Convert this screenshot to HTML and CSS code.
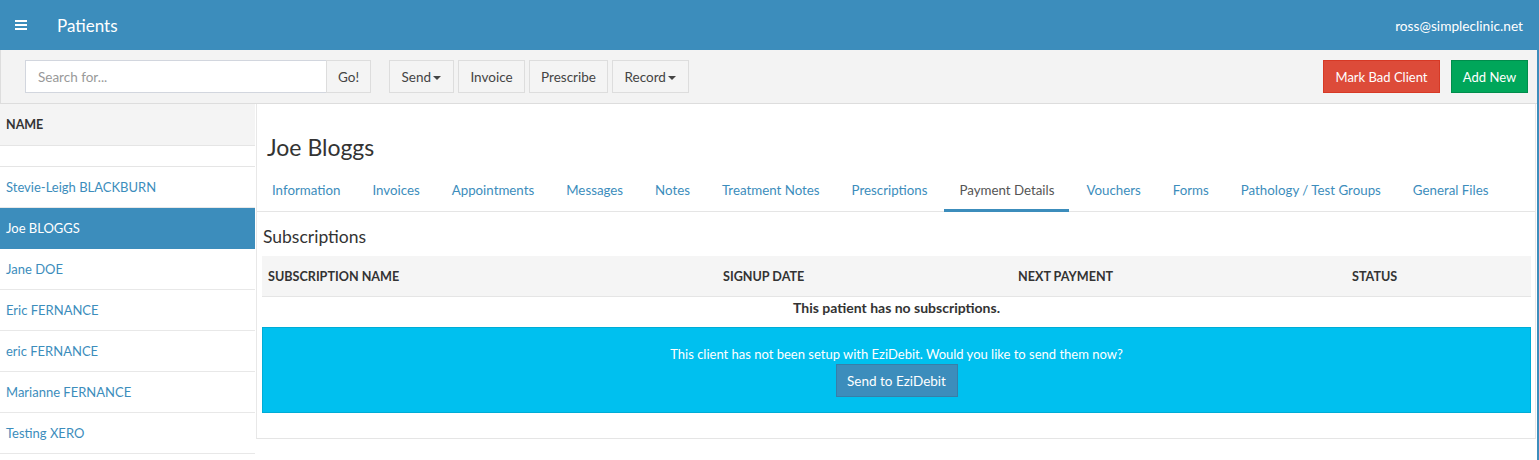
FILE: index.html
```html
<!DOCTYPE html>
<html>
<head>
<meta charset="utf-8">
<link rel="stylesheet" href="styles.css">
</head>
<body>
<header class="navbar">
  <span class="burger"><i></i><i></i><i></i></span>
  <span class="title">Patients</span>
  <span class="email">ross@simpleclinic.net</span>
</header>
<div class="wrap">
  <div class="toolbar">
    <div class="search">
      <input class="search-input" type="text" placeholder="Search for...">
      <button class="btn go">Go!</button>
    </div>
    <div class="actions">
      <button class="btn w-send">Send <span class="caret"></span></button>
      <button class="btn w-inv">Invoice</button>
      <button class="btn w-pre">Prescribe</button>
      <button class="btn w-rec">Record <span class="caret"></span></button>
    </div>
    <div class="right">
      <button class="btn danger">Mark Bad Client</button>
      <button class="btn success">Add New</button>
    </div>
  </div>
  <div class="main">
    <aside class="sidebar">
      <div class="side-head">NAME</div>
      <div class="side-empty"></div>
      <div class="side-row">Stevie-Leigh BLACKBURN</div>
      <div class="side-row active">Joe BLOGGS</div>
      <div class="side-row">Jane DOE</div>
      <div class="side-row">Eric FERNANCE</div>
      <div class="side-row">eric FERNANCE</div>
      <div class="side-row">Marianne FERNANCE</div>
      <div class="side-row">Testing XERO</div>
    </aside>
    <section class="panel">
      <h1 class="patient">Joe Bloggs</h1>
      <nav class="tabs">
        <span class="tab">Information</span>
        <span class="tab">Invoices</span>
        <span class="tab">Appointments</span>
        <span class="tab">Messages</span>
        <span class="tab">Notes</span>
        <span class="tab">Treatment Notes</span>
        <span class="tab">Prescriptions</span>
        <span class="tab active">Payment Details</span>
        <span class="tab">Vouchers</span>
        <span class="tab">Forms</span>
        <span class="tab">Pathology / Test Groups</span>
        <span class="tab">General Files</span>
      </nav>
      <div class="tab-body">
        <h3 class="sub-title">Subscriptions</h3>
        <div class="table">
          <div class="thead">
            <span>SUBSCRIPTION NAME</span>
            <span>SIGNUP DATE</span>
            <span>NEXT PAYMENT</span>
            <span>STATUS</span>
          </div>
          <div class="empty-row">This patient has no subscriptions.</div>
        </div>
        <div class="callout">
          <p>This client has not been setup with EziDebit. Would you like to send them now?</p>
          <button class="btn primary">Send to EziDebit</button>
        </div>
      </div>
    </section>
  </div>
</div>
</body>
</html>
```
FILE: styles.css
```css
* { box-sizing: border-box; }
html, body { margin: 0; padding: 0; background: #fff; }
body {
  font-family: Lato, "Open Sans", sans-serif;
  font-size: 14px;
  color: #333;
  width: 1539px;
  height: 460px;
  overflow: hidden;
}
.navbar {
  height: 50px;
  background: #3c8dbc;
  color: #fff;
  display: flex;
  align-items: center;
  padding: 0 16px 0 15px;
}
.burger {
  width: 12px;
  height: 10px;
  display: flex;
  flex-direction: column;
  justify-content: space-between;
}
.burger i { display: block; height: 2px; background: #fff; }
.title { margin-left: 30px; font-size: 17px; }
.email { margin-left: auto; font-size: 13.7px; }

.wrap {
  border-right: 2px solid #3c8dbc;
  height: 410px;
}
.toolbar {
  height: 54px;
  background: #f3f3f3;
  border-left: 1px solid #ddd;
  border-bottom: 1px solid #ddd;
  display: flex;
  align-items: center;
  padding: 0 9px 0 24px;
}
.search { display: flex; }
.search-input {
  width: 302px;
  height: 33px;
  border: 1px solid #d2d6de;
  padding: 0 12px;
  font: inherit;
  font-size: 13.5px;
  color: #555;
  outline: none;
}
.search-input::placeholder { color: #999; }
.btn {
  height: 33px;
  font: inherit;
  font-size: 13.5px;
  color: #444;
  background: #f4f4f4;
  border: 1px solid #ddd;
  padding: 0 12px;
  cursor: pointer;
  white-space: nowrap;
}
.go { width: 45px; margin-left: -1px; padding: 0; }
.actions { display: flex; gap: 4px; margin-left: 18px; }
.w-send { width: 65px; padding: 0; }
.w-inv { width: 67px; padding: 0; }
.w-pre { width: 79px; padding: 0; }
.w-rec { width: 77px; padding: 0; }
.caret {
  display: inline-block;
  width: 0; height: 0;
  border-left: 4px solid transparent;
  border-right: 4px solid transparent;
  border-top: 4px solid #444;
  vertical-align: middle;
  margin-left: -1px;
}
.right { margin-left: auto; display: flex; gap: 11px; }
.danger { background: #dd4b39; border-color: #d73925; color: #fff; width: 117px; padding: 0; font-size: 13px; }
.success { background: #00a65a; border-color: #008d4c; color: #fff; width: 77px; padding: 0; font-size: 13px; }

.main { display: flex; height: 356px; }
.sidebar { width: 256px; flex: none; }
.side-head {
  height: 42px;
  background: #f4f4f4;
  border-bottom: 1px solid #e5e5e5;
  font-weight: bold;
  font-size: 12.5px;
  display: flex;
  align-items: center;
  padding-left: 6px;
  color: #333;
  width: 255px;
}
.side-empty { height: 21px; border-bottom: 1px solid #e5e5e5; width: 255px; }
.side-row {
  height: 41px;
  width: 255px;
  border-bottom: 1px solid #e8e8e8;
  display: flex;
  align-items: center;
  padding-left: 6px;
  color: #3c8dbc;
  font-size: 13px;
}
.side-row.active { background: #3c8dbc; color: #fff; border-bottom-color: #3c8dbc; }

.panel {
  flex: 1;
  height: 335px;
  border-left: 1px solid #e8e8e8;
  border-right: 1px solid #e8e8e8;
  border-bottom: 1px solid #e5e5e5;
  margin-right: 1px;
}
.patient {
  margin: 0;
  padding: 29px 0 0 10px;
  height: 66px;
  font-size: 23px;
  font-weight: normal;
  color: #333;
  line-height: 28px;
}
.tabs {
  display: flex;
  height: 42px;
  border-bottom: 1px solid #e5e5e5;
  gap: 2px;
}
.tab {
  padding: 0 15px;
  height: 42px;
  display: flex;
  align-items: center;
  color: #3c8dbc;
  font-size: 13.3px;
  white-space: nowrap;
  border-bottom: 3px solid transparent;
  margin-bottom: -1px;
}
.tab.active { color: #555; border-bottom-color: #3c8dbc; }

.tab-body { padding: 0 4px 0 5px; }
.sub-title {
  margin: 0;
  height: 44px;
  font-size: 17.5px;
  font-weight: normal;
  line-height: 22px;
  padding-top: 14px;
  padding-left: 1px;
}
.thead {
  display: grid;
  grid-template-columns: 455px 295px 334px 1fr;
  height: 41px;
  background: #f5f5f5;
  border-bottom: 1px solid #e5e5e5;
  align-items: center;
  font-weight: bold;
  font-size: 12.6px;
  color: #333;
}
.thead span { padding-left: 6px; }
.empty-row {
  height: 21px;
  text-align: center;
  font-weight: bold;
  font-size: 14px;
  line-height: 21px;
}
.callout {
  margin-top: 9px;
  height: 86px;
  background: #00c0ef;
  border: 1px solid #00acd6;
  color: #fff;
  text-align: center;
  padding-top: 18px;
}
.callout p { margin: 0 0 2px; line-height: 16px; font-size: 13px; }
.primary {
  background: #3c8dbc;
  border-color: #367fa9;
  color: #fff;
  width: 122px;
  padding: 0;
}
```
